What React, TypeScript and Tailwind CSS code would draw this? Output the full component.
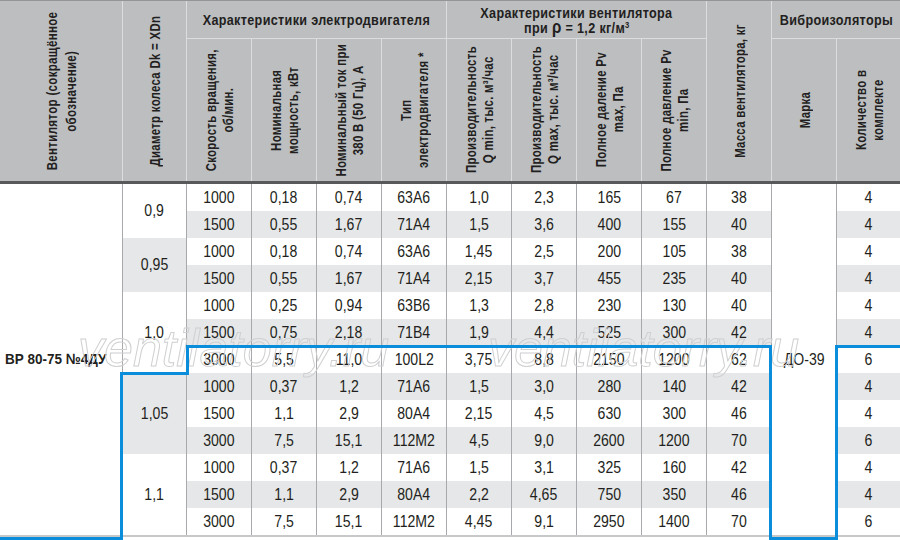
const rows = [
  ['1000', '0,18', '0,74', '63А6', '1,0', '2,3', '165', '67', '38', '4'],
  ['1500', '0,55', '1,67', '71А4', '1,5', '3,6', '400', '155', '40', '4'],
  ['1000', '0,18', '0,74', '63А6', '1,45', '2,5', '200', '105', '38', '4'],
  ['1500', '0,55', '1,67', '71А4', '2,15', '3,7', '455', '235', '40', '4'],
  ['1000', '0,25', '0,94', '63В6', '1,3', '2,8', '230', '130', '40', '4'],
  ['1500', '0,75', '2,18', '71В4', '1,9', '4,4', '525', '300', '42', '4'],
  ['3000', '5,5', '11,0', '100L2', '3,75', '8,8', '2150', '1200', '62', '6'],
  ['1000', '0,37', '1,2', '71А6', '1,5', '3,0', '280', '140', '42', '4'],
  ['1500', '1,1', '2,9', '80А4', '2,15', '4,5', '630', '300', '46', '4'],
  ['3000', '7,5', '15,1', '112М2', '4,5', '9,0', '2600', '1200', '70', '6'],
  ['1000', '0,37', '1,2', '71А6', '1,5', '3,1', '325', '160', '42', '4'],
  ['1500', '1,1', '2,9', '80А4', '2,2', '4,65', '750', '350', '46', '4'],
  ['3000', '7,5', '15,1', '112М2', '4,45', '9,1', '2950', '1400', '70', '6'],
]

// diameter groups: row index where it starts -> label, span class, shaded
const diameters: Record<number, { label: string; span: string; shaded: boolean }> = {
  0: { label: '0,9', span: 'row-span-2', shaded: false },
  2: { label: '0,95', span: 'row-span-2', shaded: true },
  4: { label: '1,0', span: 'row-span-3', shaded: false },
  7: { label: '1,05', span: 'row-span-3', shaded: true },
  10: { label: '1,1', span: 'row-span-3', shaded: false },
}

const cols = 'grid grid-cols-[122px_64px_repeat(10,65px)_64px]'
const head = "font-['Liberation_Sans',Arial,sans-serif] font-bold text-[15px] tracking-[0.4px] text-[#231f20]"

// condensed look: Helvetica-like font squeezed along the reading direction
const VText = ({ children, className = '' }: { children: React.ReactNode; className?: string }) => (
  <div className={`flex items-center justify-center border-l border-[#dcdddf] ${className}`}>
    <span className="rotate-180 scale-y-[0.76] whitespace-nowrap text-center leading-[17px] [writing-mode:vertical-rl]">
      {children}
    </span>
  </div>
)

const HText = ({ children }: { children: React.ReactNode }) => (
  <span className="inline-block scale-x-[0.84] whitespace-nowrap">{children}</span>
)

const Header = () => (
  <div className={`${cols} grid-rows-[38px_142px] border-t border-[#939598] bg-[#bcbec0] ${head}`}>
    <div className="row-span-2 flex items-center justify-center">
      <span className="rotate-180 scale-y-[0.77] whitespace-nowrap text-center leading-[19px] [writing-mode:vertical-rl]">
        Вентилятор (сокращённое<br />обозначение)
      </span>
    </div>
    <VText className="row-span-2">Диаметр колеса Dk = XDn</VText>
    <div className="col-span-4 flex items-center justify-center border-b border-l border-[#dcdddf] pt-[2px]">
      <HText>Характеристики электродвигателя</HText>
    </div>
    <div className="col-span-4 flex flex-col items-center justify-center border-b border-l border-[#dcdddf] leading-[15px]">
      <HText>Характеристики вентилятора</HText>
      <HText>
        при <span className="text-[18px] leading-[12px]">ρ</span> = 1,2 кг/м<sup className="text-[9px]">3</sup>
      </HText>
    </div>
    <VText className="row-span-2">Масса вентилятора, кг</VText>
    <div className="col-span-2 flex items-center justify-center border-b border-l border-[#dcdddf] pt-[2px]">
      <HText>Виброизоляторы</HText>
    </div>

    <VText>Скорость вращения,<br />об/мин.</VText>
    <VText>Номинальная<br />мощность, кВт</VText>
    <VText>Номинальный ток при<br />380 В (50 Гц), А</VText>
    <VText>Тип<br />электродвигателя *</VText>
    <VText>Производительность<br />Q min, тыс. м³/час</VText>
    <VText>Производительность<br />Q max, тыс. м³/час</VText>
    <VText>Полное даление Pv<br />max, Па</VText>
    <VText>Полное давление Pv<br />min, Па</VText>
    <VText>Марка</VText>
    <VText>Количество в<br />комплекте</VText>
  </div>
)

const Num = ({ children }: { children: React.ReactNode }) => (
  <span className="inline-block scale-x-[0.88] whitespace-nowrap">{children}</span>
)

const Body = () => (
  <div className={`${cols} h-[353px] grid-rows-13 border-b-2 border-[#c7c8ca] font-['Liberation_Sans',Arial,sans-serif] text-[16px] text-[#231f20]`}>
    {rows.map((r, i) => {
      const stripe = i % 2 === 1 ? 'bg-[#e6e7e8]' : 'bg-white'
      const d = diameters[i]
      return [
        i === 0 && (
          <div key="name" className="row-span-13 flex items-center bg-white pl-[5px] text-[15px] font-bold">
            <span className="inline-block origin-left scale-x-[0.9] whitespace-nowrap">ВР 80-75 №4ДУ</span>
          </div>
        ),
        d && (
          <div
            key={`d${i}`}
            className={`${d.span} flex items-center justify-center border-l border-[#a7a9ac] ${d.shaded ? 'bg-[#e6e7e8]' : 'bg-white'}`}
          >
            <Num>{d.label}</Num>
          </div>
        ),
        ...r.slice(0, 9).map((v, j) => (
          <div key={`${i}-${j}`} className={`flex items-center justify-center border-l border-[#a7a9ac] ${stripe}`}>
            <Num>{v}</Num>
          </div>
        )),
        i === 0 && (
          <div key="marka" className="row-span-13 flex items-center justify-center border-l border-[#a7a9ac] bg-white">
            <Num>ДО-39</Num>
          </div>
        ),
        <div key={`q${i}`} className={`flex items-center justify-center border-l border-[#a7a9ac] ${stripe}`}>
          <Num>{r[9]}</Num>
        </div>,
      ]
    })}
  </div>
)

export default function App() {
  return (
    <div className="relative h-[540px] w-[900px] overflow-hidden bg-white">
      <Header />
      <div className="h-[3px] bg-[#58595b]" />
      <Body />

      {/* watermark */}
      <div className="pointer-events-none absolute inset-0 font-['Liberation_Sans',Arial,sans-serif] text-[52px] italic leading-[52px] text-transparent [-webkit-text-stroke:1px_#cfd0d2]">
        <span className="absolute left-[78px] top-[322px]">ventilatorry.ru</span>
        <span className="absolute left-[488px] top-[322px]">ventilatorry.ru</span>
      </div>

      {/* blue highlight outline */}
      <div className="absolute left-0 top-[537px] h-[3px] w-[123px] bg-[#0a8ddb]" />
      <div className="absolute left-[120px] top-[372px] h-[168px] w-[3px] bg-[#0a8ddb]" />
      <div className="absolute left-[120px] top-[372px] h-[3px] w-[69px] bg-[#0a8ddb]" />
      <div className="absolute left-[186px] top-[345px] h-[30px] w-[3px] bg-[#0a8ddb]" />
      <div className="absolute left-[186px] top-[345px] h-[3px] w-[586px] bg-[#0a8ddb]" />
      <div className="absolute left-[769px] top-[345px] h-[195px] w-[3px] bg-[#0a8ddb]" />
      <div className="absolute left-[769px] top-[537px] h-[3px] w-[69px] bg-[#0a8ddb]" />
      <div className="absolute left-[835px] top-[345px] h-[195px] w-[3px] bg-[#0a8ddb]" />
      <div className="absolute left-[835px] top-[345px] h-[3px] w-[65px] bg-[#0a8ddb]" />
    </div>
  )
}
